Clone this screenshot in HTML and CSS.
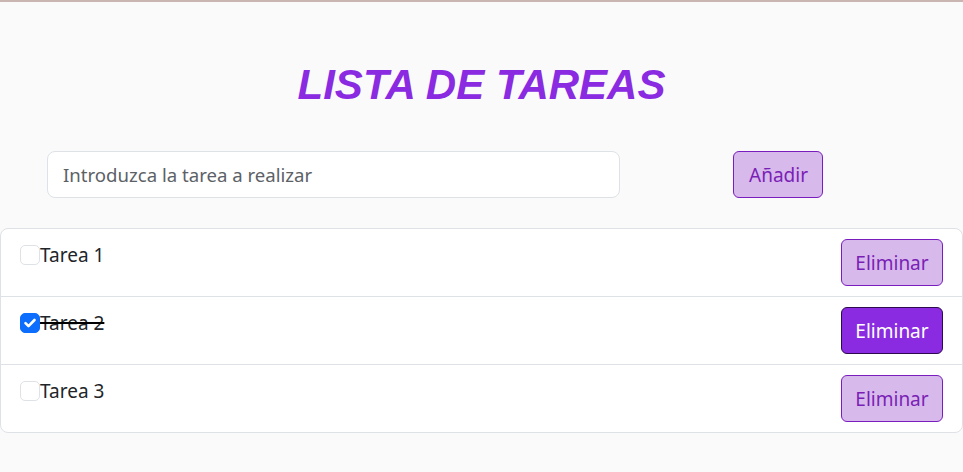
FILE: index.html
```html
<!DOCTYPE html>
<html lang="es">
<head>
<meta charset="utf-8">
<title>Lista de tareas</title>
<link rel="stylesheet" href="styles.css">
</head>
<body>
<h1 class="title">LISTA DE TAREAS</h1>
<form class="add-row" onsubmit="return false">
  <input class="task-input" type="text" placeholder="Introduzca la tarea a realizar">
  <button class="btn btn-light" type="button">Añadir</button>
</form>
<ul class="task-list">
  <li class="task">
    <label class="task-label"><span class="check"></span><span class="task-text">Tarea 1</span></label>
    <button class="btn btn-light" type="button">Eliminar</button>
  </li>
  <li class="task">
    <label class="task-label"><span class="check checked"><svg viewBox="0 0 20 20" width="20" height="20"><path d="M5.5 10.2l3 3 6-6.2" fill="none" stroke="#fff" stroke-width="2.6" stroke-linecap="round" stroke-linejoin="round"/></svg></span><span class="task-text done">Tarea 2</span></label>
    <button class="btn btn-dark" type="button">Eliminar</button>
  </li>
  <li class="task">
    <label class="task-label"><span class="check"></span><span class="task-text">Tarea 3</span></label>
    <button class="btn btn-light" type="button">Eliminar</button>
  </li>
</ul>
</body>
</html>
```
FILE: styles.css
```css
* { box-sizing: border-box; }
body {
  margin: 0;
  background: #fafafa;
  border-top: 2px solid #c9b5b1;
  font-family: "Noto Sans", "Open Sans", sans-serif;
  color: #212529;
  min-height: 472px;
}
.title {
  margin: 59px 0 0;
  text-align: center;
  font-family: "Liberation Sans", Arial, sans-serif;
  font-style: italic;
  font-weight: bold;
  font-size: 42px;
  line-height: 48px;
  color: #8a2be2;
}
.add-row {
  display: flex;
  align-items: center;
  margin: 42px 0 0 47px;
}
.task-input {
  width: 573px;
  height: 47px;
  padding: 0 15px;
  font-family: inherit;
  font-size: 18.6px;
  color: #212529;
  background: #fff;
  border: 1px solid #dee2e6;
  border-radius: 8px;
  outline: none;
}
.task-input::placeholder { color: #5c6166; }
.add-row .btn { margin-left: 113px; width: 90px; }
.btn {
  height: 47px;
  padding: 0 15px;
  font-family: inherit;
  font-size: 19px;
  border-radius: 6px;
  cursor: pointer;
}
.btn-light {
  background: #d8b9ec;
  border: 1px solid #7a1dbf;
  color: #7a1fb5;
}
.btn-dark {
  background: #8a2be2;
  border: 1px solid #2c0a4d;
  color: #fff;
}
.task-list {
  list-style: none;
  margin: 30px 0 0;
  padding: 0;
  background: #fff;
  border: 1px solid #dee2e6;
  border-radius: 8px;
}
.task {
  display: flex;
  justify-content: space-between;
  align-items: flex-start;
  height: 68px;
  padding: 10px 19px 10px 19px;
}
.task + .task { border-top: 1px solid #dee2e6; }
.task:first-child { height: 67px; }
.task-label {
  display: flex;
  align-items: flex-start;
  font-size: 19px;
  line-height: 30px;
  padding-top: 1px;
}
.check {
  display: block;
  width: 20px;
  height: 20px;
  margin-top: 5px;
  border: 1px solid #dee2e6;
  border-radius: 5px;
  background: #fff;
}
.check.checked {
  background: #0d6efd;
  border-color: #0d6efd;
  position: relative;
}
.check.checked svg { position: absolute; left: -1px; top: -1px; }
.task-text.done {
  text-decoration: line-through;
  text-decoration-thickness: 2px;
  text-decoration-color: #000;
}
.task .btn { width: 102px; padding: 0; }
```
